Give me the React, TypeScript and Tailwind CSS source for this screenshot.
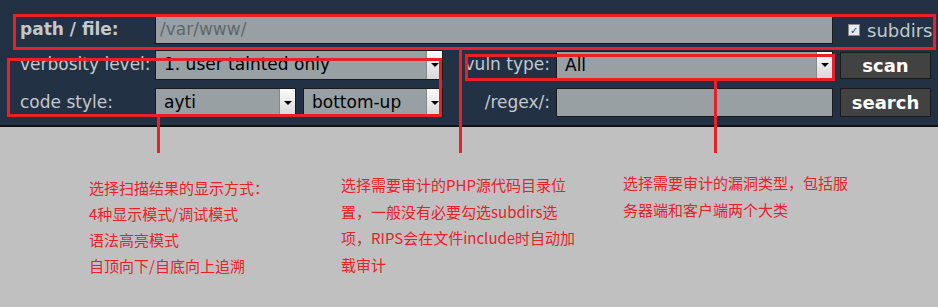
const label = "text-[17px] text-[#c4c8cc] font-['DejaVu_Sans',sans-serif]";
const field = "border border-[#1a1a1a] bg-[#98a0a3] text-[17px] font-['DejaVu_Sans',sans-serif]";

function Select({ value, w, h }: { value: string; w: string; h: string }) {
  return (
    <div className={`flex ${w} ${h} ${field} text-black`}>
      <span className="flex-1 truncate pl-[8px] leading-[27px]">{value}</span>
      <span className="flex w-[16px] items-center justify-center border-l border-[#888] bg-gradient-to-b from-[#fafafa] to-[#d8d8d8]">
        <span className="h-0 w-0 border-x-[4px] border-t-[4px] border-x-transparent border-t-black" />
      </span>
    </div>
  );
}

function Button({ children }: { children: string }) {
  return (
    <div className="ml-[7px] flex w-[91px] items-center justify-center self-stretch border border-[#1a1a1a] bg-[#424242] text-[18px] font-bold text-white font-['DejaVu_Sans',sans-serif]">
      {children}
    </div>
  );
}

const notes = [
  { left: "left-[89px]", top: "top-[175px]", lh: "leading-[26px]", lines: ["选择扫描结果的显示方式：", "4种显示模式/调试模式", "语法高亮模式", "自顶向下/自底向上追溯"] },
  { left: "left-[341px]", top: "top-[172px]", lh: "leading-[26.7px]", lines: ["选择需要审计的PHP源代码目录位", "置，一般没有必要勾选subdirs选", "项，RIPS会在文件include时自动加", "载审计"] },
  { left: "left-[623px]", top: "top-[169px]", lh: "leading-[27px]", lines: ["选择需要审计的漏洞类型，包括服", "务器端和客户端两个大类"] },
];

export default function App() {
  return (
    <div className="relative h-[307px] w-[938px] overflow-hidden bg-[#c0c0c0]">
      {/* form panel */}
      <div className="h-[127px] border-b-2 border-[#111] bg-[#223244] pl-[20px] pt-[16px]">
        <div className="flex h-[28px] items-center">
          <span className={`w-[135px] ${label} text-[16px] font-bold`}>path / file:</span>
          <div className={`flex h-[28px] w-[678px] items-center ${field} pl-[4px] text-[#60676b]`}>/var/www/</div>
          <span className="ml-[15px] flex h-[12px] w-[12px] items-center justify-center border border-[#888] bg-[#e8eaf0] text-[10px] leading-none text-[#2a3f9a]">✓</span>
          <span className={`ml-[7px] ${label} text-[18px]`}>subdirs</span>
        </div>
        <div className="mt-[6px] flex h-[30px] items-center">
          <span className={`w-[135px] ${label}`}>verbosity level:</span>
          <Select value="1. user tainted only" w="w-[288px]" h="h-[30px]" />
          <span className={`w-[113px] pr-[6px] text-right ${label}`}>vuln type:</span>
          <Select value="All" w="w-[277px]" h="h-[29px]" />
          <div className="flex h-[27px] items-center">
            <Button>scan</Button>
          </div>
        </div>
        <div className="mt-[8px] flex h-[29px] items-center">
          <span className={`w-[135px] ${label}`}>code style:</span>
          <Select value="ayti" w="w-[141px]" h="h-[29px]" />
          <div className="ml-[7px]">
            <Select value="bottom-up" w="w-[140px]" h="h-[29px]" />
          </div>
          <span className={`w-[113px] pr-[6px] text-right ${label}`}>/regex/:</span>
          <div className={`h-[29px] w-[277px] ${field}`} />
          <Button>search</Button>
        </div>
      </div>

      {/* red annotations */}
      <div className="absolute left-[13px] top-[14px] h-[36px] w-[923px] border-[3px] border-[#e8202a]" />
      <div className="absolute left-[7px] top-[58px] h-[59px] w-[435px] border-[3px] border-[#e8202a]" />
      <div className="absolute left-[465px] top-[54px] h-[27px] w-[370px] border-[3px] border-[#e8202a]" />
      <div className="absolute left-[157px] top-[114px] h-[39px] w-[3px] bg-[#e8202a]" />
      <div className="absolute left-[459px] top-[48px] h-[105px] w-[3px] bg-[#e8202a]" />
      <div className="absolute left-[714px] top-[79px] h-[74px] w-[3px] bg-[#e8202a]" />

      {notes.map((n, i) => (
        <div
          key={i}
          className={`absolute ${n.left} ${n.top} ${n.lh} whitespace-nowrap text-[15px] text-[#e8202a] font-['Noto_Sans_CJK_SC',sans-serif]`}
        >
          {n.lines.map((l) => (
            <div key={l}>{l}</div>
          ))}
        </div>
      ))}
    </div>
  );
}
